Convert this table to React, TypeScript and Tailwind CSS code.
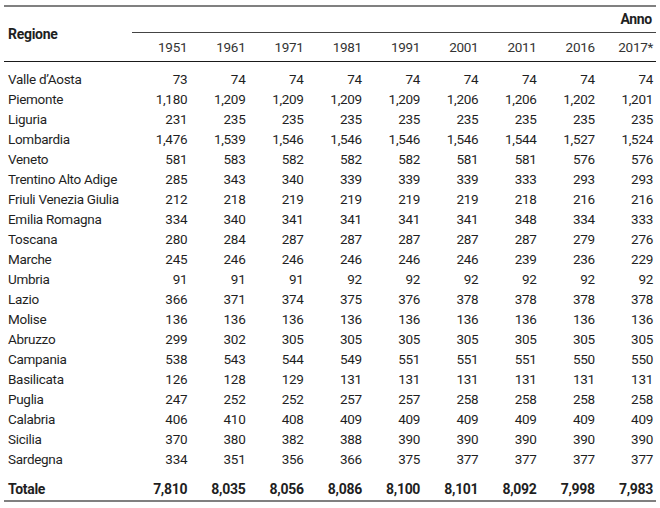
import React from "react";

const years = ["1951", "1961", "1971", "1981", "1991", "2001", "2011", "2016", "2017*"];

const rows: [string, string[]][] = [
  ["Valle d\u2019Aosta", ["73", "74", "74", "74", "74", "74", "74", "74", "74"]],
  ["Piemonte", ["1,180", "1,209", "1,209", "1,209", "1,209", "1,206", "1,206", "1,202", "1,201"]],
  ["Liguria", ["231", "235", "235", "235", "235", "235", "235", "235", "235"]],
  ["Lombardia", ["1,476", "1,539", "1,546", "1,546", "1,546", "1,546", "1,544", "1,527", "1,524"]],
  ["Veneto", ["581", "583", "582", "582", "582", "581", "581", "576", "576"]],
  ["Trentino Alto Adige", ["285", "343", "340", "339", "339", "339", "333", "293", "293"]],
  ["Friuli Venezia Giulia", ["212", "218", "219", "219", "219", "219", "218", "216", "216"]],
  ["Emilia Romagna", ["334", "340", "341", "341", "341", "341", "348", "334", "333"]],
  ["Toscana", ["280", "284", "287", "287", "287", "287", "287", "279", "276"]],
  ["Marche", ["245", "246", "246", "246", "246", "246", "239", "236", "229"]],
  ["Umbria", ["91", "91", "91", "92", "92", "92", "92", "92", "92"]],
  ["Lazio", ["366", "371", "374", "375", "376", "378", "378", "378", "378"]],
  ["Molise", ["136", "136", "136", "136", "136", "136", "136", "136", "136"]],
  ["Abruzzo", ["299", "302", "305", "305", "305", "305", "305", "305", "305"]],
  ["Campania", ["538", "543", "544", "549", "551", "551", "551", "550", "550"]],
  ["Basilicata", ["126", "128", "129", "131", "131", "131", "131", "131", "131"]],
  ["Puglia", ["247", "252", "252", "257", "257", "258", "258", "258", "258"]],
  ["Calabria", ["406", "410", "408", "409", "409", "409", "409", "409", "409"]],
  ["Sicilia", ["370", "380", "382", "388", "390", "390", "390", "390", "390"]],
  ["Sardegna", ["334", "351", "356", "366", "375", "377", "377", "377", "377"]],
];

const totals = ["7,810", "8,035", "8,056", "8,086", "8,100", "8,101", "8,092", "7,998", "7,983"];

export default function App() {
  return (
    <div
      className="w-[660px] h-[508px] bg-white pt-[5px] pl-[4px] text-[#1f1f1f] tracking-[-0.3px]"
      style={{ fontFamily: "Roboto, 'Liberation Sans', sans-serif" }}
    >
      <div className="w-[652px] border-t-2 border-b-2 border-[#808080]">
        {/* Header */}
        <div className="grid grid-cols-[128px_repeat(9,1fr)] grid-rows-[26px_28px] border-b-[1.5px] border-[#1a1a1a]">
          <div className="row-span-2 flex items-center pl-[4px] text-[14px] font-bold">Regione</div>
          <div className="col-span-9 flex items-center justify-end pr-[4px] border-b-[1.5px] border-[#444] text-[14px] font-bold">
            Anno
          </div>
          {years.map((y) => (
            <div key={y} className="flex items-center justify-end pr-[3px] text-[13.5px] text-[#333]">
              {y}
            </div>
          ))}
        </div>
        {/* Body */}
        <div className="pt-[7px] pb-[10px]">
          {rows.map(([name, vals]) => (
            <div key={name} className="grid grid-cols-[128px_repeat(9,1fr)] h-[20px] items-center text-[13.5px]">
              <div className="pl-[4px] whitespace-nowrap">{name}</div>
              {vals.map((v, i) => (
                <div key={i} className="text-right pr-[3px]">
                  {v}
                </div>
              ))}
            </div>
          ))}
        </div>
        <div className="grid grid-cols-[128px_repeat(9,1fr)] h-[21px] items-center text-[14px] font-bold">
          <div className="pl-[4px]">Totale</div>
          {totals.map((v, i) => (
            <div key={i} className="text-right pr-[3px]">
              {v}
            </div>
          ))}
        </div>
      </div>
    </div>
  );
}
